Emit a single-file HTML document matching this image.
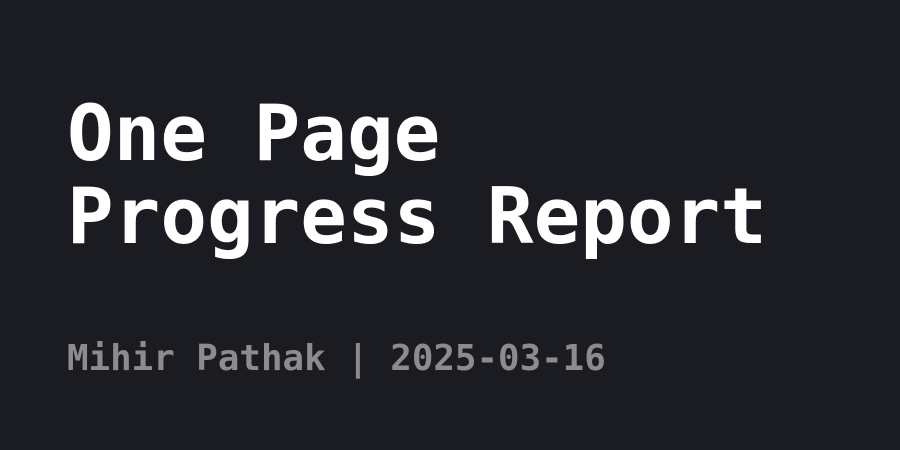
<!DOCTYPE html>
<html><head><meta charset="utf-8"><style>
html,body{margin:0;padding:0;width:900px;height:450px;background:#1b1b22;overflow:hidden}
.t{position:absolute;left:67px;font-family:"DejaVu Sans Mono","Liberation Mono",monospace;font-weight:bold;white-space:pre;}
.a{font-size:77.5px;color:#ffffff;letter-spacing:0px;line-height:1}
.s{font-size:35.8px;color:#8b8b90;line-height:1}
</style></head><body>
<div class="t a" style="top:96px">One Page</div>
<div class="t a" style="top:179px">Progress Report</div>
<div class="t s" style="top:341px">Mihir Pathak | 2025-03-16</div>
</body></html>
